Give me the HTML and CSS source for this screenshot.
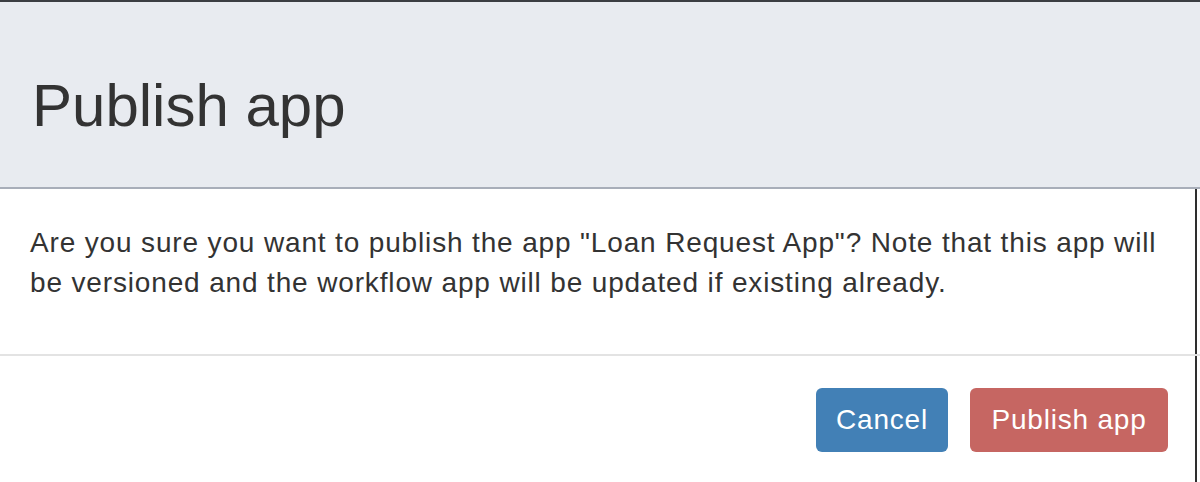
FILE: index.html
```html
<!DOCTYPE html>
<html lang="en">
<head>
    <meta charset="UTF-8">
    <meta name="viewport" content="width=device-width, initial-scale=1.0">
    <title>Publish app</title>
    <link rel="stylesheet" href="styles.css">
</head>
<body>
    <div class="modal">
        <div class="modal-header">
            <h4 class="modal-title">Publish app</h4>
        </div>
        <div class="modal-main">
            <div class="modal-body">
                <p>Are you sure you want to publish the app "Loan Request App"? Note that this app will be versioned and the workflow app will be updated if existing already.</p>
            </div>
            <div class="modal-footer">
                <button class="btn btn-cancel">Cancel</button>
                <button class="btn btn-publish">Publish app</button>
            </div>
        </div>
    </div>
</body>
</html>
```

FILE: styles.css
```css
html,
body {
    margin: 0;
    padding: 0;
    background-color: white;
}
body {
    font-family: "Liberation Sans", Arial, sans-serif;
    color: #333333;
    width: 1200px;
    height: 482px;
    overflow: hidden;
}
.modal {
    border-top: 2px solid #3b3e42;
}
.modal-header {
    background-color: #e8ebf0;
    border-bottom: 2px solid #a8aeb9;
    padding: 71px 32px 48px;
}
.modal-title {
    margin: 0;
    font-size: 60px;
    font-weight: normal;
    line-height: 66px;
}
.modal-main {
    width: 1195px;
    border-right: 2px solid #2e2e2e;
    height: 300px;
}
.modal-body {
    padding: 34px 30px 0;
    height: 131px;
}
.modal-body p {
    margin: 0;
    font-size: 28px;
    line-height: 40px;
    letter-spacing: 0.85px;
}
.modal-footer {
    border-top: 2px solid #e3e3e3;
    margin-right: -5px;
    padding: 32px 32px 0 0;
    display: flex;
    justify-content: flex-end;
    gap: 22px;
}
.btn {
    font-family: "Liberation Sans", Arial, sans-serif;
    font-size: 28px;
    line-height: 40px;
    letter-spacing: 0.8px;
    height: 64px;
    padding: 12px 0;
    border: none;
    border-radius: 6px;
    color: white;
    cursor: pointer;
}
.btn-cancel {
    background-color: #4280b6;
    width: 132px;
}
.btn-publish {
    background-color: #c66662;
    width: 198px;
}
```
